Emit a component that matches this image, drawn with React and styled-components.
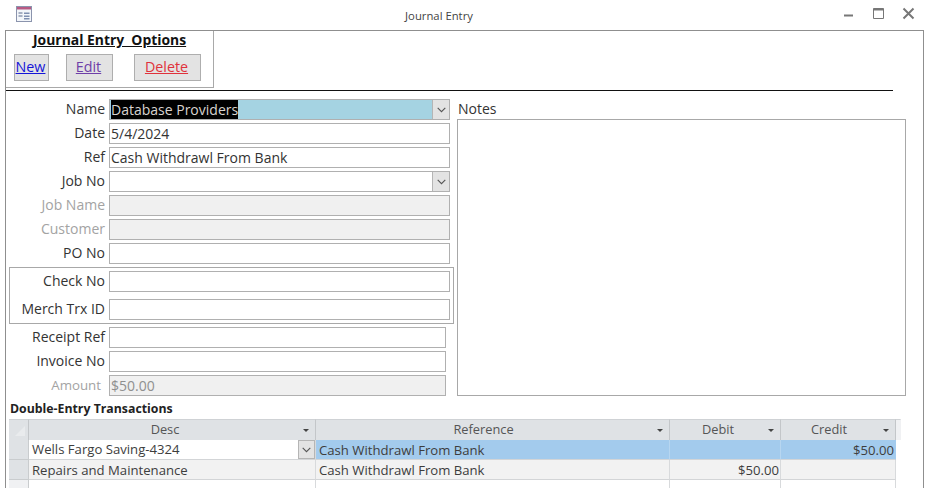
import React from "react";
import styled, { createGlobalStyle } from "styled-components";

const Global = createGlobalStyle`
  html, body { margin: 0; padding: 0; background: #fff; overflow: hidden; }
  body { font-family: "Open Sans", "Noto Sans", "Liberation Sans", sans-serif; }
  * { box-sizing: border-box; }
`;

const Page = styled.div`
  width: 929px;
  height: 488px;
  overflow: hidden;
  background: #fff;
  color: #262626;
  font-size: 14px;
`;

const TitleBar = styled.header`
  height: 30px;
  display: grid;
  grid-template-columns: 1fr auto;
  align-items: center;
  padding: 0 14px 0 16px;
  position: relative;
`;

const TitleIcon = styled.svg`
  width: 16px;
  height: 16px;
  display: block;
  margin-top: -2px;
`;

const TitleText = styled.div`
  position: absolute;
  left: 0;
  right: 51px;
  top: 8px;
  text-align: center;
  font-size: 11.3px;
  line-height: 15px;
  color: #444;
`;

const WinButtons = styled.div`
  display: flex;
  gap: 17px;
  align-items: center;
  margin-top: -4px;
`;

const WinIcon = styled.svg`
  width: 13px;
  height: 13px;
  display: block;
  color: #777;
`;

const Frame = styled.main`
  margin-left: 5px;
  width: 919px;
  height: 458px;
  border-top: 1px solid #8f8f8f;
  border-left: 1px solid #8f8f8f;
  border-right: 1px solid #8f8f8f;
`;

const OptionsBox = styled.section`
  width: 208px;
  height: 57px;
  border-right: 1px solid #a9a9a9;
  border-bottom: 1px solid #a9a9a9;
`;

const OptionsTitle = styled.div`
  margin-left: 27px;
  font-size: 13.9px;
  font-weight: 700;
  line-height: 18px;
  color: #111;
  text-decoration: underline;
  white-space: pre;
`;

const ButtonRow = styled.div`
  display: flex;
  margin-top: 5px;
  margin-left: 8px;
`;

const ActionButton = styled.button`
  width: ${p => p.$w}px;
  height: 27px;
  margin-right: ${p => p.$mr}px;
  padding: 0 2px 3px 0;
  border: 1px solid #aeaeae;
  background: #e3e3e3;
  font: inherit;
  font-size: 14.3px;
  color: ${p => p.$color};
  text-decoration: underline;
`;

const Divider = styled.hr`
  width: 887px;
  height: 1px;
  margin: 2px 0 0;
  border: 0;
  background: #111;
`;

const FormArea = styled.div`
  display: grid;
  grid-template-columns: 451px 449px;
  padding-top: 8px;
`;

const Fields = styled.div`
  display: flex;
  flex-direction: column;
  gap: 3px;
`;

const Row = styled.div`
  display: grid;
  grid-template-columns: 99px ${p => p.$w || 341}px;
  column-gap: 4px;
  align-items: center;
  height: 21px;
`;

const Label = styled.label`
  text-align: right;
  line-height: 20px;
  margin-top: -2px;
  white-space: nowrap;
  color: #333;
`;

const AmountLabel = styled(Label)`
  font-size: 13.3px;
  padding-right: 4px;
  color: #a3a3a3;
`;

const DimLabel = styled(Label)`
  color: #a3a3a3;
`;

const Field = styled.div`
  height: 21px;
  display: flex;
  align-items: center;
  border: 1px solid #b0b0b0;
  background: ${p => p.$bg || "#fff"};
  color: ${p => (p.$dim ? "#8f8f8f" : "#333")};
  padding-left: 1px;
  line-height: 19px;
  white-space: nowrap;
`;

const Selected = styled.span`
  background: #000;
  color: #d9d4d0;
`;

const FieldFill = styled.span`
  flex: 1;
`;

const Drop = styled.span`
  width: 17px;
  height: 19px;
  display: flex;
  align-items: center;
  justify-content: center;
  background: #e3e3e3;
  border-left: 1px solid #b5b5b5;
`;

const Chevron = styled.svg`
  width: 9px;
  height: 6px;
  display: block;
`;

const CheckGroup = styled.div`
  margin: 0 0 0 3px;
  width: 445px;
  height: 57px;
  border: 1px solid #a8a8a8;
  padding-top: 3px;
  display: flex;
  flex-direction: column;
  gap: 7px;
`;

const GroupRow = styled(Row)`
  grid-template-columns: 95px 341px;
`;

const Notes = styled.section`
  margin-top: 1px;
`;

const NotesLabel = styled.div`
  line-height: 18px;
  height: 19px;
  margin-left: 1px;
  color: #333;
`;

const NotesBox = styled.div`
  width: 449px;
  height: 277px;
  border: 1px solid #a8a8a8;
`;

const SectionTitle = styled.div`
  margin: 4px 0 0 4px;
  height: 19px;
  font-size: 12.3px;
  font-weight: 700;
  line-height: 18px;
  color: #222;
`;

const Grid = styled.div`
  margin-left: 3px;
  width: 892px;
  display: grid;
  grid-template-columns: 20px 287px 354px 111px 115px 5px;
  grid-auto-rows: 20px;
  grid-template-rows: 21px;
  font-size: 13.15px;
`;

const HeadCell = styled.div`
  height: 21px;
  font-size: 12.8px;
  background: ${p => (p.$edge ? "#f0f1f3" : "#dfe2e5")};
  border-right: 1px solid ${p => (p.$edge ? "transparent" : "#c3c6c9")};
  border-top: 1px solid #cfd2d5;
  position: relative;
  text-align: center;
  line-height: 18px;
  color: #555;
  padding-right: ${p => p.$pr || 0}px;
`;

const Corner = styled.svg`
  position: absolute;
  left: 5px;
  top: 5px;
  width: 12px;
  height: 12px;
`;

const Sort = styled.i`
  position: absolute;
  right: 6px;
  top: 9px;
  width: 0;
  height: 0;
  border-left: 3px solid transparent;
  border-right: 3px solid transparent;
  border-top: 3px solid #444;
`;

const Selector = styled.div`
  background: ${p => (p.$blank ? "#f0f1f3" : "#dfe2e5")};
  border-bottom: 1px solid #c9ccce;
  border-right: 1px solid #c9ccce;
`;

const Cell = styled.div`
  display: flex;
  align-items: center;
  justify-content: ${p => (p.$right ? "flex-end" : "flex-start")};
  background: ${p => p.$bg || "#fff"};
  border-right: 1px solid ${p => p.$line || "#d8dadc"};
  border-bottom: 1px solid #d3d5d7;
  padding: ${p => (p.$right ? "1px 1px 0 0" : "1px 0 0 3px")};
  color: ${p => p.$color || "#3d3d3d"};
  white-space: nowrap;
  line-height: 19px;
  overflow: hidden;
`;

const ComboCell = styled(Cell)`
  padding-top: 0;
  padding-right: 0;
`;

const GridDrop = styled(Drop)`
  height: 19px;
  border: 1px solid #b5b5b5;
  flex: none;
`;

const ChevronIcon = () => (
  <Chevron viewBox="0 0 9 6" fill="none" stroke="#555" strokeWidth="1.1">
    <path d="M.7.8l3.8 3.9L8.3.8" />
  </Chevron>
);

const SelectedBlue = "#a3cbed";
const RowGray = "#f2f2f2";

export default function App() {
  return (
    <Page>
      <Global />
      <TitleBar>
        <TitleIcon viewBox="0 0 16 16">
          <rect x=".5" y=".5" width="15" height="15" fill="#f3f6fa" stroke="#8b94ad" />
          <rect x="1" y="1" width="14" height="2.5" fill="#b85a84" />
          <path d="M2.5 7h4M2.5 10h4" stroke="#5a6a8c" />
          <path d="M8 6.5h5.5v1.6H8zM8 9.5h5.5v1.6H8zM8 12h5.5v1.4H8z" fill="#7f8fb0" />
        </TitleIcon>
        <TitleText>Journal Entry</TitleText>
        <WinButtons>
          <WinIcon viewBox="0 0 13 13"><path d="M2 8.5h9" stroke="currentColor" strokeWidth="2" /></WinIcon>
          <WinIcon viewBox="0 0 13 13" fill="none" stroke="currentColor">
            <path d="M1.5 1.5h10v10h-10z" /><path d="M1.5 2.5h10" strokeWidth="2" />
          </WinIcon>
          <WinIcon viewBox="0 0 13 13" fill="none" stroke="currentColor" strokeWidth="2"><path d="M1.5 1.5l10 10M11.5 1.5l-10 10" /></WinIcon>
        </WinButtons>
      </TitleBar>
      <Frame>
        <OptionsBox>
          <OptionsTitle>Journal Entry  Options</OptionsTitle>
          <ButtonRow>
            <ActionButton $w={35} $mr={17} $color="#1515d8">New</ActionButton>
            <ActionButton $w={47} $mr={21} $color="#6f3fa8">Edit</ActionButton>
            <ActionButton $w={67} $mr={0} $color="#e0323c">Delete</ActionButton>
          </ButtonRow>
        </OptionsBox>
        <Divider />
        <FormArea>
          <Fields>
            <Row>
              <Label>Name</Label>
              <Field $bg="#a5d3e2">
                <Selected>Database Providers</Selected>
                <FieldFill />
                <Drop><ChevronIcon /></Drop>
              </Field>
            </Row>
            <Row><Label>Date</Label><Field>5/4/2024</Field></Row>
            <Row><Label>Ref</Label><Field>Cash Withdrawl From Bank</Field></Row>
            <Row>
              <Label>Job No</Label>
              <Field><FieldFill /><Drop><ChevronIcon /></Drop></Field>
            </Row>
            <Row><DimLabel>Job Name</DimLabel><Field $bg="#f0f0f0" /></Row>
            <Row><DimLabel>Customer</DimLabel><Field $bg="#f0f0f0" /></Row>
            <Row><Label>PO No</Label><Field /></Row>
            <CheckGroup>
              <GroupRow><Label>Check No</Label><Field /></GroupRow>
              <GroupRow><Label>Merch Trx ID</Label><Field /></GroupRow>
            </CheckGroup>
            <Row $w={337}><Label>Receipt Ref</Label><Field /></Row>
            <Row $w={337}><Label>Invoice No</Label><Field /></Row>
            <Row $w={337}><AmountLabel>Amount</AmountLabel><Field $bg="#f0f0f0" $dim>$50.00</Field></Row>
          </Fields>
          <Notes>
            <NotesLabel>Notes</NotesLabel>
            <NotesBox />
          </Notes>
        </FormArea>
        <SectionTitle>Double-Entry Transactions</SectionTitle>
        <Grid>
          <HeadCell><Corner viewBox="0 0 12 12"><path d="M1 11L11 1v10z" fill="#e9ebed" /></Corner></HeadCell>
          <HeadCell $pr={14}>Desc<Sort /></HeadCell>
          <HeadCell $pr={18}>Reference<Sort /></HeadCell>
          <HeadCell $pr={14}>Debit<Sort /></HeadCell>
          <HeadCell $pr={18}>Credit<Sort /></HeadCell>
          <HeadCell $edge />

          <Selector />
          <ComboCell>
            <FieldFill>Wells Fargo Saving-4324</FieldFill>
            <GridDrop><ChevronIcon /></GridDrop>
          </ComboCell>
          <Cell $bg={SelectedBlue} $line="#b7d6f0">Cash Withdrawl From Bank</Cell>
          <Cell $bg={SelectedBlue} $line="#b7d6f0" />
          <Cell $bg={SelectedBlue} $line={SelectedBlue} $right>$50.00</Cell>
          <div />

          <Selector />
          <Cell $bg={RowGray}>Repairs and Maintenance</Cell>
          <Cell $bg={RowGray}>Cash Withdrawl From Bank</Cell>
          <Cell $bg={RowGray} $right>$50.00</Cell>
          <Cell $bg={RowGray} />
          <div />

          <Selector $blank />
          <Cell />
          <Cell />
          <Cell />
          <Cell />
          <div />
        </Grid>
      </Frame>
    </Page>
  );
}
